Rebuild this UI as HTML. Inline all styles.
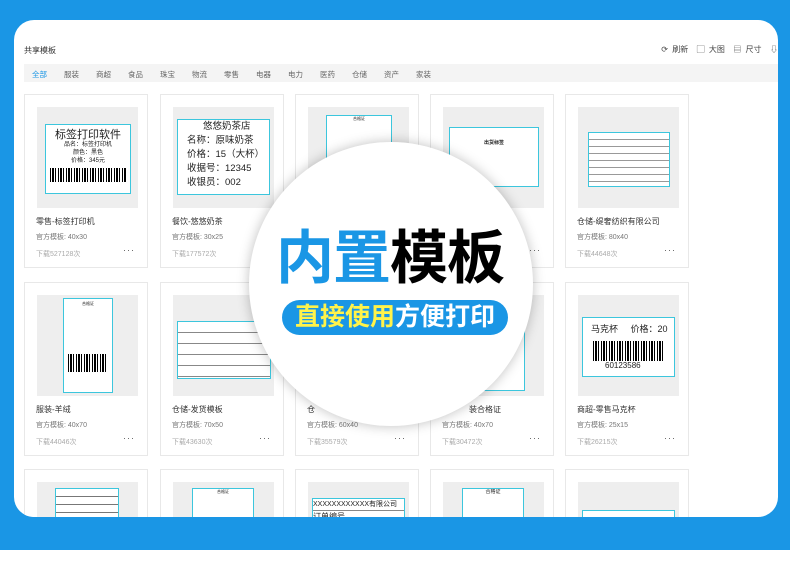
<!DOCTYPE html>
<html><head><meta charset="utf-8"><style>
*{margin:0;padding:0;box-sizing:border-box}
body{width:790px;height:584px;background:#fff;position:relative;overflow:hidden;font-family:"Liberation Sans","Noto Sans CJK SC",sans-serif}
.blue{position:absolute;left:0;top:0;width:790px;height:550px;background:#1a96e5}
.panel{position:absolute;left:14px;top:20px;width:764px;height:497px;background:#fff;border-radius:20px;overflow:hidden}
.title{position:absolute;left:10px;top:25px;font-size:8px;color:#333}
.tools{position:absolute;right:0;top:24px;font-size:8px;color:#444;word-spacing:2px}
.tabs{position:absolute;left:10px;top:44px;width:760px;height:18px;background:#f4f4f4;font-size:7.5px;color:#666;padding:5px 0 0 8px}
.tabs span{margin-right:17px}
.inner{position:absolute;left:-14px;top:-20px;width:790px;height:584px}
.card{position:absolute;width:124px;height:174px;border:1px solid #e8e8e8;background:#fff}
.img{position:absolute;left:12px;top:12px;width:101px;height:101px;background:#eee;overflow:hidden}
.lab{position:absolute;background:#fff;border:1.5px solid #3cc6dd;font-size:6px;color:#222;text-align:center;line-height:1.3;overflow:hidden}
.t1{position:absolute;left:11px;top:121px;font-size:8px;color:#333}
.t2{position:absolute;left:11px;top:137px;font-size:7px;color:#777}
.t3{position:absolute;left:11px;top:154px;font-size:7px;color:#aaa}
.dots{position:absolute;right:12px;top:150px;font-size:9px;color:#555;letter-spacing:1px}
.bc{height:14px;background:repeating-linear-gradient(90deg,#000 0 1px,#fff 1px 2px,#000 2px 4px,#fff 4px 5px,#000 5px 6px,#fff 6px 8px);margin:2px 4px 0}
.circle{position:absolute;left:249px;top:142px;width:284px;height:284px;border-radius:50%;background:#fff;box-shadow:0 0 12px rgba(0,0,0,.25)}
.big{position:absolute;left:276px;top:224px;font-size:58px;font-weight:bold;letter-spacing:-1px;white-space:nowrap;line-height:70px}
.pill{position:absolute;left:282px;top:300px;width:226px;height:35px;border-radius:18px;background:#1a96e5;color:#fff;font-size:25px;font-weight:bold;text-align:center;line-height:35px;white-space:nowrap}
</style></head><body>
<div class="blue"></div>
<div class="panel">
<div class="title">共享模板</div>
<div class="tools">⟳ 刷新 &nbsp;▢ 大图 &nbsp;▤ 尺寸 &nbsp;⇩</div>
<div class="tabs"><span style="color:#1a96e5">全部</span><span>服装</span><span>商超</span><span>食品</span><span>珠宝</span><span>物流</span><span>零售</span><span>电器</span><span>电力</span><span>医药</span><span>仓储</span><span>资产</span><span>家装</span></div>
<div class="inner">
<!-- row 1 -->
<div class="card" style="left:24px;top:94px"><div class="img"><div class="lab" style="left:8px;top:17px;width:86px;height:70px;padding-top:3px"><div style="font-size:11px">标签打印软件</div><div>品名：标签打印机</div><div>颜色：黑色</div><div>价格：345元</div><div class="bc"></div></div></div><div class="t1">零售-标签打印机</div><div class="t2">官方模板: 40x30</div><div class="t3">下载527128次</div><div class="dots">···</div></div>
<div class="card" style="left:160px;top:94px"><div class="img"><div class="lab" style="left:4px;top:12px;width:93px;height:76px;font-size:9.5px;text-align:left;padding-left:9px;line-height:14px"><div style="padding-left:16px">悠悠奶茶店</div><div>名称：原味奶茶</div><div>价格：15（大杯）</div><div>收据号：12345</div><div>收银员：002</div></div></div><div class="t1">餐饮-悠悠奶茶</div><div class="t2">官方模板: 30x25</div><div class="t3">下载177572次</div><div class="dots">···</div></div>
<div class="card" style="left:295px;top:94px"><div class="img"><div class="lab" style="left:18px;top:8px;width:66px;height:80px;font-size:4px">合格证</div></div></div>
<div class="card" style="left:430px;top:94px"><div class="img"><div class="lab" style="left:6px;top:20px;width:90px;height:60px;font-size:5px"><div style="margin-top:12px;font-weight:bold">出货标签</div></div></div><div class="dots">···</div></div>
<div class="card" style="left:565px;top:94px"><div class="img"><div class="lab" style="left:10px;top:25px;width:82px;height:55px;font-size:4px;background:repeating-linear-gradient(#fff 0 6px,#999 6px 7px)"></div></div><div class="t1">仓储-缇奢纺织有限公司</div><div class="t2">官方模板: 80x40</div><div class="t3">下载44648次</div><div class="dots">···</div></div>
<!-- row 2 -->
<div class="card" style="left:24px;top:282px"><div class="img"><div class="lab" style="left:26px;top:3px;width:50px;height:95px;font-size:4px;padding-top:2px">合格证<div class="bc" style="margin-top:48px;height:18px"></div></div></div><div class="t1">服装-羊绒</div><div class="t2">官方模板: 40x70</div><div class="t3">下载44046次</div><div class="dots">···</div></div>
<div class="card" style="left:160px;top:282px"><div class="img"><div class="lab" style="left:4px;top:26px;width:94px;height:58px;background:repeating-linear-gradient(#fff 0 10px,#888 10px 11px)"></div></div><div class="t1">仓储-发货模板</div><div class="t2">官方模板: 70x50</div><div class="t3">下载43630次</div><div class="dots">···</div></div>
<div class="card" style="left:295px;top:282px"><div class="img"></div><div class="t1">仓</div><div class="t2">官方模板: 60x40</div><div class="t3">下载35579次</div><div class="dots">···</div></div>
<div class="card" style="left:430px;top:282px"><div class="img"><div class="lab" style="left:20px;top:10px;width:62px;height:86px"></div></div><div class="t1" style="left:38px">装合格证</div><div class="t2">官方模板: 40x70</div><div class="t3">下载30472次</div><div class="dots">···</div></div>
<div class="card" style="left:565px;top:282px"><div class="img"><div class="lab" style="left:4px;top:22px;width:93px;height:60px;font-size:9px;text-align:left;padding:6px 0 0 8px">马克杯 &nbsp; &nbsp; 价格：20<div class="bc" style="height:20px;margin:5px 10px 0 2px"></div><div style="font-size:8px;padding-left:14px">60123586</div></div></div><div class="t1">商超-零售马克杯</div><div class="t2">官方模板: 25x15</div><div class="t3">下载26215次</div><div class="dots">···</div></div>
<!-- row 3 -->
<div class="card" style="left:24px;top:469px"><div class="img"><div class="lab" style="left:18px;top:6px;width:64px;height:80px;background:repeating-linear-gradient(#fff 0 7px,#777 7px 8px)"></div></div></div>
<div class="card" style="left:160px;top:469px"><div class="img"><div class="lab" style="left:19px;top:6px;width:62px;height:80px;font-size:4px">合格证</div></div></div>
<div class="card" style="left:295px;top:469px"><div class="img"><div class="lab" style="left:4px;top:16px;width:93px;height:60px;font-size:7px;text-align:left;line-height:11px;white-space:nowrap"><div style="border-bottom:1px solid #888">XXXXXXXXXXXX有限公司</div><div style="font-size:8px">订单编号</div></div></div></div>
<div class="card" style="left:430px;top:469px"><div class="img"><div class="lab" style="left:19px;top:6px;width:62px;height:80px;font-size:5px">合格证</div></div></div>
<div class="card" style="left:565px;top:469px"><div class="img"><div class="lab" style="left:4px;top:28px;width:93px;height:50px"></div></div></div>
</div>
</div>
<div class="circle"></div>
<div class="big"><span style="color:#1a96e5">内置</span><span style="color:#000">模板</span></div>
<div class="pill"><span style="color:#fff34a">直接使用</span>方便打印</div>
</body></html>
